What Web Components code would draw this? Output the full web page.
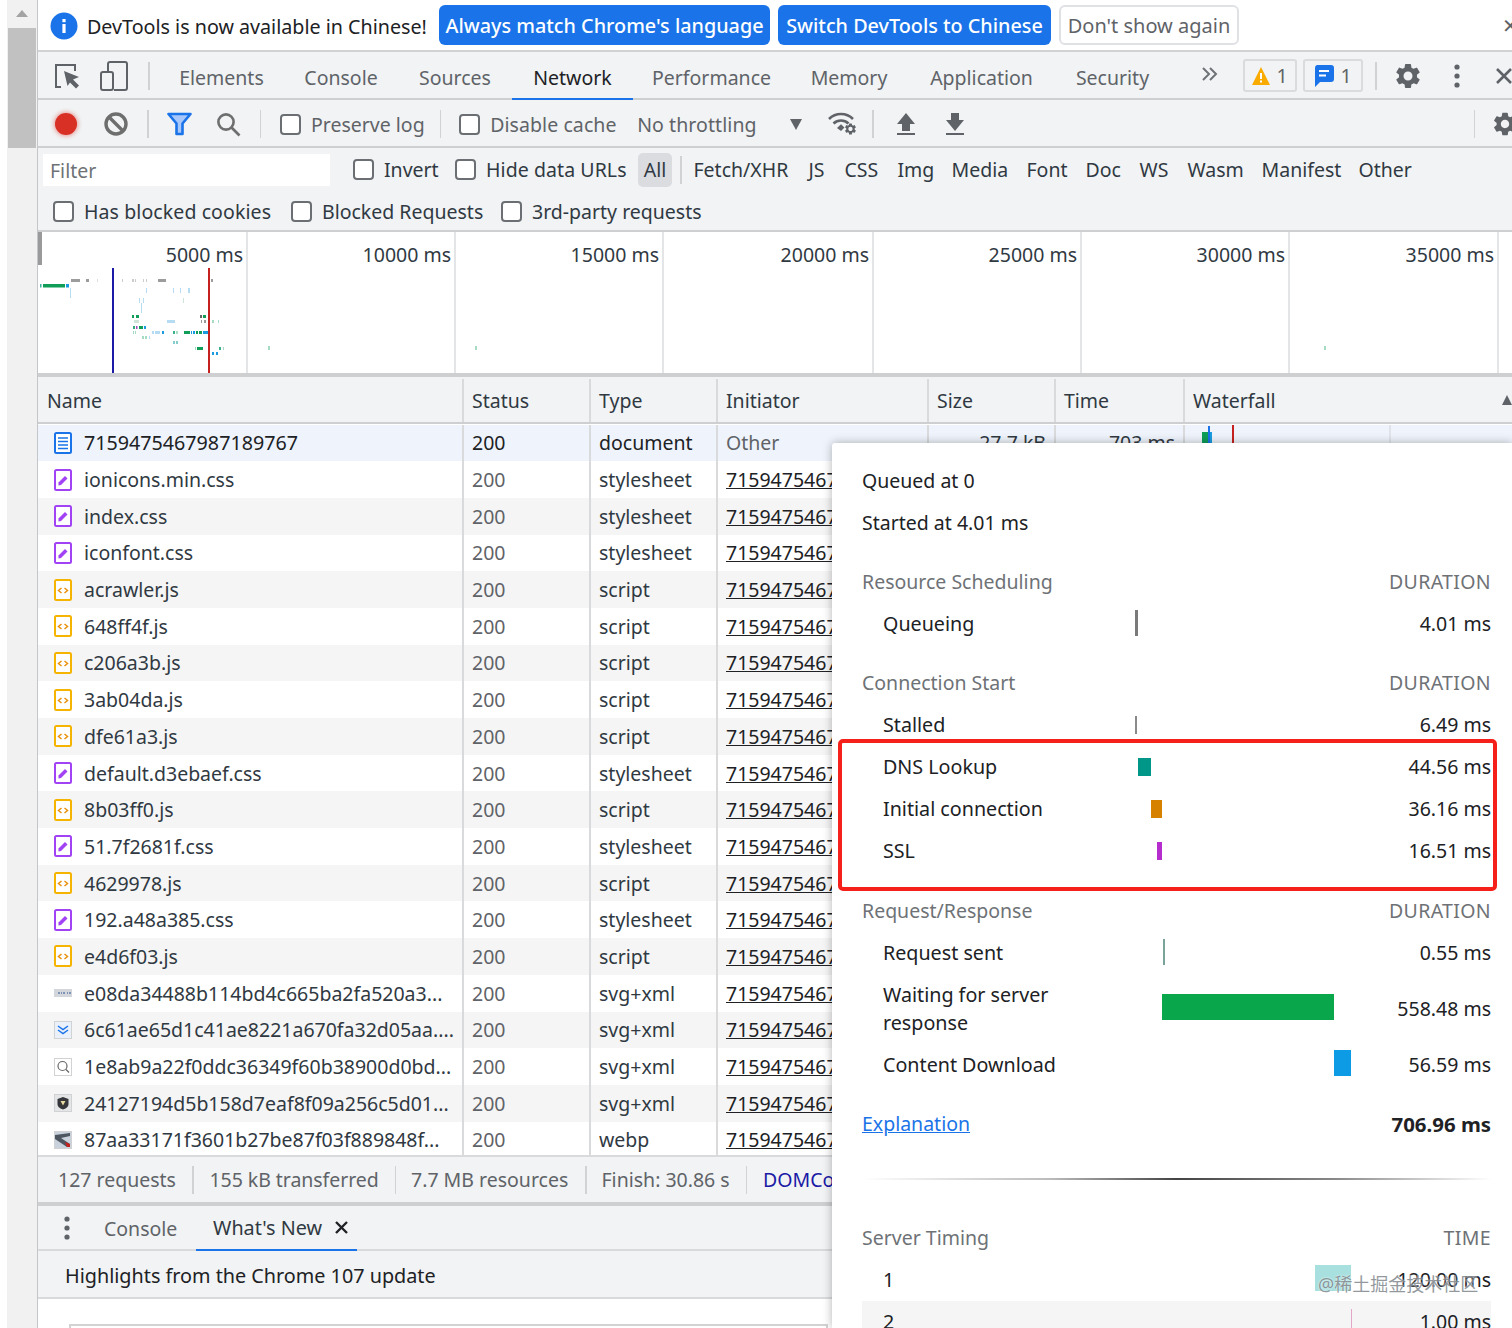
<!DOCTYPE html>
<html>
<head>
<meta charset="utf-8">
<title>DevTools Network</title>
<style>
  html, body { margin: 0; height: 1328px; overflow: hidden; background: #fff; }
  body { font: 19.5px "Noto Sans", "Noto Sans CJK SC", sans-serif; color: #303942; }
</style>
</head>
<body>
<dt-shell>
  <dt-infobar></dt-infobar>
  <dt-maintabs></dt-maintabs>
  <dt-nettoolbar></dt-nettoolbar>
  <dt-filterbar></dt-filterbar>
  <dt-overview></dt-overview>
  <net-table></net-table>
  <dt-summary></dt-summary>
  <dt-drawer></dt-drawer>
  <timing-popover slot="over"></timing-popover>
  <red-box slot="over"></red-box>
  <water-mark slot="over">@稀土掘金技术社区</water-mark>
</dt-shell>

<script>
const GEAR = 'M19.14 12.94c.04-.3.06-.61.06-.94 0-.32-.02-.64-.07-.94l2.03-1.58a.49.49 0 0 0 .12-.61l-1.92-3.32a.488.488 0 0 0-.59-.22l-2.39.96c-.5-.38-1.03-.7-1.62-.94l-.36-2.54a.484.484 0 0 0-.48-.41h-3.84c-.24 0-.43.17-.47.41l-.36 2.54c-.59.24-1.13.57-1.62.94l-2.39-.96c-.22-.08-.47 0-.59.22L2.74 8.87c-.12.21-.08.47.12.61l2.03 1.58c-.05.3-.09.63-.09.94s.02.64.07.94l-2.03 1.58a.49.49 0 0 0-.12.61l1.92 3.32c.12.22.37.29.59.22l2.39-.96c.5.38 1.03.7 1.62.94l.36 2.54c.05.24.24.41.48.41h3.84c.24 0 .44-.17.47-.41l.36-2.54c.59-.24 1.13-.56 1.62-.94l2.39.96c.22.08.47 0 .59-.22l1.92-3.32c.12-.22.07-.47-.12-.61l-2.01-1.58zM12 15.6c-1.98 0-3.6-1.62-3.6-3.6s1.62-3.6 3.6-3.6 3.6 1.62 3.6 3.6-1.62 3.6-3.6 3.6z';

class DtBase extends HTMLElement {
    constructor() {
        super();
        this.attachShadow({ mode: 'open' });
    }
    connectedCallback() {
        this.shadowRoot.innerHTML = `<style>${this.styles()}</style>${this.markup()}`;
    }
    styles() { return ':host{display:block}'; }
    markup() { return '<slot></slot>'; }
}

class DtShell extends DtBase {
    styles() {
        return `
        :host { display: flex; height: 1328px; position: relative; overflow: hidden; }
        .gutter { width: 30px; margin-left: 7px; background: #f1f1f1; flex: none; display: flex; flex-direction: column; align-items: center; }
        .arrow { margin-top: 10px; width: 0; height: 0; border: 6px solid transparent; border-top: 0; border-bottom: 7px solid #a3a3a3; }
        .thumb { margin-top: 11px; width: 28px; height: 120px; background: #c1c1c1; }
        .main { flex: 1; min-width: 0; border-left: 1px solid #c4c7c9; display: flex; flex-direction: column; overflow: hidden; }
        .main ::slotted(*) { flex: none; }
        `;
    }
    markup() {
        return `<div class="gutter"><div class="arrow"></div><div class="thumb"></div></div>
        <div class="main"><slot></slot></div><slot name="over"></slot>`;
    }
}

class DtCheck extends DtBase {
    styles() {
        return `
        :host { display: inline-flex; align-items: center; gap: 10px; white-space: nowrap; color: inherit; flex: none; }
        i { width: 17px; height: 17px; border: 2px solid #6b6f73; border-radius: 4px; background: #fff; flex: none; }
        `;
    }
    markup() { return '<i></i><span><slot></slot></span>'; }
}

class DtInfobar extends DtBase {
    styles() {
        return `
        :host { display: flex; align-items: center; height: 52px; box-sizing: border-box; border-bottom: 2px solid #d0d2d4; background: #fff; padding: 2px 0 0 12px; color: #202124; white-space: nowrap; overflow: hidden; font-size: 19.7px; }
        svg { width: 28px; height: 28px; flex: none; margin-top: -1px; }
        .msg { margin-left: 9px; width: 352px; flex: none; }
        .btn { height: 40px; margin-top: -2px; box-sizing: border-box; border-radius: 6px; display: flex; align-items: center; justify-content: center; font-weight: 500; flex: none; margin-right: 8px; }
        .pri { background: #1a73e8; color: #fff; font-size: 19.8px; }
        .sec { background: #fff; color: #5f6368; border: 2px solid #dfe1e5; font-size: 20px; font-weight: 400; }
        .x { margin-left: auto; color: #5f6368; margin-right: -7px; margin-top: -2px; font-size: 20px; }
        `;
    }
    markup() {
        return `<svg viewBox="0 0 28 28"><circle cx="14" cy="14" r="13.5" fill="#1a73e8"/><rect x="12.4" y="12" width="3.2" height="9" fill="#fff"/><rect x="12.4" y="7" width="3.2" height="3.2" fill="#fff"/></svg>
        <span class="msg">DevTools is now available in Chinese!</span>
        <div class="btn pri" style="width:331px">Always match Chrome's language</div>
        <div class="btn pri" style="width:273px">Switch DevTools to Chinese</div>
        <div class="btn sec" style="width:180px">Don't show again</div>
        <span class="x">✕</span>`;
    }
}

class DtMaintabs extends DtBase {
    styles() {
        return `
        :host { display: flex; align-items: stretch; height: 48px; box-sizing: border-box; padding-top: 1px; border-bottom: 2px solid #cdcfd1; background: #f1f3f4; color: #5f6368; white-space: nowrap; }
        .ic { display: flex; align-items: center; flex: none; }
        .sep { width: 1.5px; height: 28px; background: #d0d2d4; align-self: center; flex: none; }
        .tab { display: flex; align-items: center; justify-content: center; flex: none; box-sizing: border-box; height: 47px; margin-bottom: -2px; padding-top: 4px; border-bottom: 2px solid transparent; }
        .tab.on { color: #202124; border-bottom-color: #1a73e8; }
        .pill { align-self: center; display: flex; align-items: center; justify-content: center; gap: 6px; height: 33px; box-sizing: border-box; border: 2px solid #d9dbdd; border-radius: 3px; flex: none; }
        `;
    }
    markup() {
        const tabs = [['Elements', 125], ['Console', 114], ['Sources', 114], ['Network', 121, 1], ['Performance', 157], ['Memory', 118], ['Application', 147], ['Security', 115]];
        return `
        <div class="ic" style="margin-left:16px"><svg width="27" height="28" viewBox="0 0 27 28" fill="none"><path d="M7 25H2V3h19v6" stroke="#5f6368" stroke-width="2"/><path d="M10 9l15 6-6 2.4 6 6-3 3-6-6L13.500 24z" fill="#5f6368"/></svg></div>
        <div class="ic" style="margin-left:19px"><svg width="28" height="30" viewBox="0 0 28 30" fill="none" stroke="#5f6368" stroke-width="2"><path d="M8 10V3a2 2 0 0 1 2-2h15a2 2 0 0 1 2 2v24a2 2 0 0 1-2 2H14"/><rect x="1" y="11" width="12" height="18" rx="2"/></svg></div>
        <div class="sep" style="margin-left:20px"></div>
        <div style="width:9.500px;flex:none"></div>
        ${tabs.map(t => `<div class="tab${t[2] ? ' on' : ''}" style="width:${t[1]}px">${t[0]}</div>`).join('')}
        <div class="ic" style="margin-left:32px;margin-top:-4px"><svg width="16" height="14" viewBox="0 0 16 14" fill="none" stroke="#6e7276" stroke-width="2"><path d="M1 1l6 6-6 6M8 1l6 6-6 6"/></svg></div>
        <div class="pill" style="margin-left:25px;width:54px"><svg width="18" height="18" viewBox="0 0 18 18"><path d="M9 0l9 18H0z" fill="#f9ab00"/><rect x="8" y="6" width="2" height="6" fill="#fff"/><rect x="8" y="13.500" width="2" height="2" fill="#fff"/></svg><span>1</span></div>
        <div class="pill" style="margin-left:6px;width:60px"><svg width="20" height="22" viewBox="0 0 20 22"><path d="M3 0h14a3 3 0 0 1 3 3v11a3 3 0 0 1-3 3H6l-5 5V3a3 3 0 0 1 2-3z" fill="#1a73e8"/><rect x="5" y="5" width="10" height="2" fill="#fff"/><rect x="5" y="9.500" width="7" height="2" fill="#fff"/></svg><span>1</span></div>
        <div class="sep" style="margin-left:12px"></div>
        <div class="ic" style="margin-left:16px"><svg width="30" height="30" viewBox="0 0 24 24" fill="#5f6368"><path d="${GEAR}"/></svg></div>
        <div class="ic" style="margin-left:31px"><svg width="6" height="24" viewBox="0 0 6 24" fill="#5f6368"><circle cx="3" cy="3" r="2.600"/><circle cx="3" cy="12" r="2.600"/><circle cx="3" cy="21" r="2.600"/></svg></div>
        <div class="ic" style="margin-left:36px"><svg width="16" height="16" viewBox="0 0 16 16" stroke="#5f6368" stroke-width="2.600"><path d="M1 1l14 14M15 1L1 15"/></svg></div>`;
    }
}

class DtNettoolbar extends DtBase {
    styles() {
        return `
        :host { display: flex; align-items: center; height: 48px; box-sizing: border-box; padding-top: 2px; border-bottom: 2px solid #cdcfd1; background: #f1f3f4; color: #5f6368; white-space: nowrap; overflow: hidden; }
        .ic { display: flex; flex: none; }
        .sep { width: 1.5px; height: 28px; background: #d0d2d4; flex: none; }
        .rec { width: 22px; height: 22px; border-radius: 50%; background: #d93025; box-shadow: 0 0 4px 1px rgba(217,48,37,.45); flex: none; }
        .label { flex: none; }
        .tri { width: 0; height: 0; border: 6.5px solid transparent; border-bottom: 0; border-top: 11px solid #5f6368; flex: none; }
        `;
    }
    markup() {
        return `
        <div class="rec" style="margin-left:17px"></div>
        <div class="ic" style="margin-left:27px"><svg width="24" height="24" viewBox="0 0 24 24" fill="none" stroke="#6e6e6e" stroke-width="3.400"><circle cx="12" cy="12" r="10"/><path d="M5 5l14 14"/></svg></div>
        <div class="sep" style="margin-left:19px"></div>
        <div class="ic" style="margin-left:18px"><svg width="25" height="24" viewBox="0 0 25 24"><path d="M1.500 2h22l-8 9.500V22h-6V11.500z" fill="#a8c7fa" stroke="#1a73e8" stroke-width="2.600" stroke-linejoin="round"/></svg></div>
        <div class="ic" style="margin-left:24px"><svg width="25" height="25" viewBox="0 0 25 25" fill="none" stroke="#6e6e6e" stroke-width="2.600"><circle cx="10" cy="10" r="7.600"/><path d="M15.500 15.500l8 8"/></svg></div>
        <div class="sep" style="margin-left:19px"></div>
        <dt-check style="margin-left:19px">Preserve log</dt-check>
        <div class="sep" style="margin-left:15px"></div>
        <dt-check style="margin-left:18px;width:158px;letter-spacing:.08px">Disable cache</dt-check>
        <span class="label" style="margin-left:20px;width:153px;letter-spacing:.08px">No throttling</span>
        <div class="tri"></div>
        <div class="ic" style="margin-left:26px"><svg width="30" height="28" viewBox="0 0 30 28"><path d="M1 9a17 17 0 0 1 24 0M5.500 13.500a11 11 0 0 1 15 0" fill="none" stroke="#5f6368" stroke-width="2.600"/><path d="M9 18l4-3.800 3.500 3.200-3.500 3.600z" fill="#5f6368"/><g transform="translate(15.500 12) scale(.58)"><path fill="#5f6368" d="${GEAR}"/></g></svg></div>
        <div class="sep" style="margin-left:14px"></div>
        <div class="ic" style="margin-left:22px"><svg width="20" height="24" viewBox="0 0 20 24" fill="#5f6368"><path d="M10 1l9 11h-5v7H6v-7H1z"/><rect x="1" y="21" width="18" height="2"/></svg></div>
        <div class="ic" style="margin-left:29px"><svg width="20" height="24" viewBox="0 0 20 24" fill="#5f6368"><path d="M10 19L1 8h5V1h8v7h5z"/><rect x="1" y="21" width="18" height="2"/></svg></div>
        <div class="sep" style="margin-left:509px"></div>
        <div class="ic" style="margin-left:16px"><svg width="28" height="28" viewBox="0 0 24 24" fill="#5f6368"><path d="${GEAR}"/></svg></div>`;
    }
}

class DtFilterbar extends DtBase {
    styles() {
        return `
        :host { display: block; height: 84px; box-sizing: border-box; padding-top: 1px; border-bottom: 2px solid #cdcfd1; background: #f1f3f4; white-space: nowrap; overflow: hidden; color: #303942; }
        .row { display: flex; align-items: center; height: 41px; }
        .input { width: 287px; height: 32px; margin-left: 5px; background: #fff; box-sizing: border-box; padding: 2px 0 0 7px; color: #6e7276; display: flex; align-items: center; flex: none; }
        .all { width: 34px; height: 34px; background: #dadce0; border-radius: 5px; display: flex; align-items: center; justify-content: center; flex: none; }
        .sep { width: 1.5px; height: 28px; background: #d0d2d4; flex: none; margin: 0 12px 0 8px; }
        .t { flex: none; }
        `;
    }
    markup() {
        const kinds = [['Fetch/XHR', 115], ['JS', 36], ['CSS', 53], ['Img', 54], ['Media', 75], ['Font', 59], ['Doc', 54], ['WS', 48], ['Wasm', 74], ['Manifest', 97], ['Other', 60]];
        return `
        <div class="row">
          <div class="input">Filter</div>
          <dt-check style="margin-left:23px;width:102px">Invert</dt-check>
          <dt-check style="width:183px;letter-spacing:.08px">Hide data URLs</dt-check>
          <div class="all">All</div>
          <div class="sep"></div>
          ${kinds.map(k => `<span class="t" style="width:${k[1]}px">${k[0]}</span>`).join('')}
        </div>
        <div class="row" style="height:42px">
          <dt-check style="margin-left:15px;width:238px;letter-spacing:.1px">Has blocked cookies</dt-check>
          <dt-check style="width:210px">Blocked Requests</dt-check>
          <dt-check>3rd-party requests</dt-check>
        </div>`;
    }
}

class DtOverview extends DtBase {
    styles() {
        return `
        :host { display: block; position: relative; height: 145px; box-sizing: border-box; border-bottom: 4px solid #cdcfd1; background: #fff; overflow: hidden; }
        .grid { display: grid; grid-template-columns: 207px 208px 208px 210px 208px 208px 209px; height: 100%; padding-left: 3px; color: #303942; }
        .c { border-right: 2px solid #e4e5e6; text-align: right; padding: 9px 3px 0 0; white-space: nowrap; }
        svg { position: absolute; left: 0; top: 0; }
        `;
    }
    markup() {
        const L = '#b5dcf2', G = '#0f9d58', B = '#1a9be0', Y = '#9c9c9c', T = '#a5dcc3';
        const marks = [
            [71, 279, 9, 3, Y], [86, 279, 3, 3, Y], [97, 279, 1, 3, '#ddd'], [112, 279, 1, 3, '#ddd'], [122, 279, 1, 3, '#ccc'], [132, 279, 2, 3, '#ccc'], [135, 279, 1, 3, '#ccc'],
            [143, 279, 1, 3, '#ccc'], [146, 279, 1, 3, '#ccc'], [158, 279, 8, 3, Y], [211, 279, 2, 3, Y],
            [43, 284, 22, 3.5, G], [40, 284, 1.500, 3.5, '#3bb3a0'], [66, 284, 3, 3.500, B],
            [70, 288, 1, 10, L], [146, 288, 1, 5, L], [173, 288, 1, 5, L], [180, 288, 1, 5, L], [188, 288, 2, 5, L],
            [139, 298, 1, 5, L], [143, 298, 1, 5, L], [183, 298, 1, 5, '#cfe3d8'], [141, 303, 1, 10, L],
            [132, 315, 2, 3, G], [136, 315, 3, 3, G], [200, 315, 2, 3, '#666'], [203, 315, 3, 3, G],
            [134, 320, 5, 3, '#cfe3d8'], [167, 320, 8, 3, L], [201, 320, 1, 3, '#999'], [204, 320, 2, 3, '#999'], [212, 320, 2, 3, T], [218, 320, 1, 3, T],
            [133, 326, 2, 3, '#3a7'], [136, 326, 1.500, 3, '#a24bc0'], [139, 326, 4, 3, G], [144, 326, 2, 3, B],
            [133, 331, 1, 3, T], [135, 331, 1, 3, T], [152, 331, 2, 3, L], [155, 331, 5, 3, L], [162, 331, 2, 3, B],
            [173, 331, 2, 3, '#3bb38a'], [176, 331, 2, 3, T], [184, 331, 6, 3, G], [191, 331, 1, 3, B], [193, 331, 2, 3, B], [196, 331, 2, 3, G], [199, 331, 3, 3, G], [203, 331, 5, 3, B],
            [142, 336, 2, 3, T], [145, 336, 2, 3, T], [149, 336, 1, 3, L],
            [173, 341, 2, 3, '#8cc'], [176, 341, 2, 3, '#8cc'],
            [195, 347, 1, 3, T], [197, 347, 6, 3, G], [219, 347, 2, 3, '#3bb38a'], [223, 347, 1, 3, T],
            [212, 352, 2, 3, B], [216, 352, 2, 3, B],
            [268, 346, 2, 4, T], [475, 346, 2, 4, T], [1324, 346, 2, 4, T],
            [112, 268, 2, 106, '#1a1aa6'], [208, 268, 2, 106, '#c5221f'],
            [38, 232, 4, 33, '#9a9a9a']
        ];
        const labels = ['5000 ms', '10000 ms', '15000 ms', '20000 ms', '25000 ms', '30000 ms', '35000 ms'];
        // marks are given in page coordinates, the svg starts at x 38, y 232
        return `<div class="grid">${labels.map(l => `<div class="c">${l}</div>`).join('')}</div>
        <svg width="1474" height="141" viewBox="38 232 1474 141">${marks.map(m => `<rect x="${m[0]}" y="${m[1]}" width="${m[2]}" height="${m[3]}" fill="${m[4]}"/>`).join('')}</svg>`;
    }
}

class FileIcon extends DtBase {
    styles() { return ':host{display:flex;width:18px;height:22px;flex:none;align-items:center}svg{display:block}'; }
    markup() {
        const k = this.getAttribute('kind');
        const box = (c, inner) => `<svg width="18" height="22" viewBox="0 0 18 22"><rect x="1" y="1" width="16" height="20" rx="1.500" fill="#fff" stroke="${c}" stroke-width="2"/>${inner}</svg>`;
        if (k === 'doc') return box('#1a73e8', '<path d="M4 6h10M4 9.500h10M4 13h10M4 16.500h10" stroke="#1a73e8" stroke-width="1.500"/>');
        if (k === 'css') return box('#a142f4', '<path d="M4.500 16.500V13.500L11 7l2.500 2.500L7 16z" fill="#a142f4"/>');
        if (k === 'js') return box('#f4b400', '<path d="M7.500 9l-3 2.500 3 2.500M10.500 9l3 2.500-3 2.500" fill="none" stroke="#e8910c" stroke-width="1.500"/>');
        const thumb = (inner, bg) => `<svg width="18" height="18" viewBox="0 0 18 18"><rect x=".5" y=".5" width="17" height="17" fill="${bg || '#fff'}" stroke="#d0d2d4"/>${inner}</svg>`;
        if (k === 'img1') return `<svg width="18" height="8" viewBox="0 0 18 8"><rect width="18" height="8" fill="#d3d6da"/><path d="M4 4h2M7 4h1M9 4h2M13 4h1M15 4h2" stroke="#7f93b5" stroke-width="2"/></svg>`;
        if (k === 'img2') return thumb('<path d="M4 5l5 3.500L14 5M4 9l5 3.500L14 9" fill="none" stroke="#1a73e8" stroke-width="1.500"/>', '#eaf1fb');
        if (k === 'img3') return thumb('<circle cx="8.500" cy="8" r="4.500" fill="none" stroke="#666" stroke-width="1.200"/><path d="M12 11.500l3 3" stroke="#666" stroke-width="1.200"/>');
        if (k === 'img4') return thumb('<path d="M9 3l5.500 2v5c0 3-2.500 4.500-5.500 5.500C6 14.500 3.500 13 3.500 10V5z" fill="#35363a"/><path d="M6.500 7h5l-2.500 4.500z" fill="#e8d9a0"/>', '#e4e5e7');
        return thumb('<path d="M1 4l15-2v3L7 7l9 6v3H13L1 8z" fill="#4d5560"/><path d="M11 11l5 2v3h-3z" fill="#c5221f"/>', '#c9d2dc');
    }
}

class NetTable extends DtBase {
    styles() {
        return `
        :host { display: block; height: 778px; overflow: hidden; background: #fff; color: #303942; white-space: nowrap; --cols: 424px 127px 127px 211px 127px 129px 1fr; }
        .row { display: grid; grid-template-columns: var(--cols); height: 36.7px; }
        .row.head { height: 47px; box-sizing: border-box; padding-top: 2px; background: #f1f3f4; border-bottom: 2px solid #cdcfd1; }
        .body { margin-top: .5px; }
        .body .row:nth-child(odd) { background: #f5f5f5; }
        .body .row.sel { background: #eff4fc; }
        .c { display: flex; align-items: center; padding-left: 8px; border-left: 2px solid #d8dadc; overflow: hidden; min-width: 0; position: relative; }
        .c:first-child { border-left: 0; padding-left: 9px; }
        .body .c:first-child { padding-left: 16px; gap: 12px; }
        .sel .c:first-child { font-size: 19.7px; }
        .dim { color: #5f6368; }
        .dark { color: #202124; }
        .lnk { color: #202124; text-decoration: underline; }
        .r { justify-content: flex-end; padding-right: 8px; }
        .wf i { position: absolute; display: block; }
        .wf b { position: absolute; top: 0; bottom: 0; left: 204px; width: 2px; background: #e0e4ea; }
        .tri { position: absolute; right: 0; top: 16px; width: 0; height: 0; border: 5.5px solid transparent; border-top: 0; border-bottom: 10px solid #5f6368; }
        `;
    }
    markup() {
        const s = 'stylesheet', j = 'script', x = 'svg+xml';
        const rows = [
            ['ionicons.min.css', 'css', s], ['index.css', 'css', s], ['iconfont.css', 'css', s], ['acrawler.js', 'js', j], ['648ff4f.js', 'js', j],
            ['c206a3b.js', 'js', j], ['3ab04da.js', 'js', j], ['dfe61a3.js', 'js', j], ['default.d3ebaef.css', 'css', s], ['8b03ff0.js', 'js', j],
            ['51.7f2681f.css', 'css', s], ['4629978.js', 'js', j], ['192.a48a385.css', 'css', s], ['e4d6f03.js', 'js', j],
            ['e08da34488b114bd4c665ba2fa520a3...', 'img1', x], ['6c61ae65d1c41ae8221a670fa32d05aa....', 'img2', x], ['1e8ab9a22f0ddc36349f60b38900d0bd...', 'img3', x],
            ['24127194d5b158d7eaf8f09a256c5d01...', 'img4', x], ['87aa33171f3601b27be87f03f889848f...', 'img5', 'webp']
        ];
        const head = ['Name', 'Status', 'Type', 'Initiator', 'Size', 'Time'];
        const body = rows.map(r => `<div class="row"><div class="c"><file-icon kind="${r[1]}"></file-icon>${r[0]}</div><div class="c dim">200</div><div class="c">${r[2]}</div><div class="c"><span class="lnk">7159475467987189767</span></div><div class="c"></div><div class="c"></div><div class="c"></div></div>`).join('');
        return `<div class="row head">${head.map(h => `<div class="c">${h}</div>`).join('')}<div class="c">Waterfall<span class="tri"></span></div></div>
        <div class="body">
          <div class="row sel">
            <div class="c dark"><file-icon kind="doc"></file-icon>7159475467987189767</div>
            <div class="c dark">200</div>
            <div class="c dark">document</div>
            <div class="c dim">Other</div>
            <div class="c r">27.7 kB</div>
            <div class="c r">703 ms</div>
            <div class="c wf"><b></b>
              <i style="left:17px;top:7px;width:6px;height:12px;background:#0f9d58"></i>
              <i style="left:23px;top:1px;width:2px;height:18px;background:#1a73e8"></i>
              <i style="left:25px;top:7px;width:2px;height:12px;background:#1a9be0"></i>
              <i style="left:47px;top:0;width:2px;height:20px;background:#c5221f"></i>
            </div>
          </div>
          ${body}
        </div>`;
    }
}

class DtSummary extends DtBase {
    styles() {
        return `
        :host { display: flex; align-items: center; height: 51px; box-sizing: border-box; border-top: 2px solid #d8dadc; border-bottom: 4px solid #cdcfd1; background: #f1f3f4; color: #5f6368; white-space: nowrap; overflow: hidden; padding-left: 20px; }
        span { flex: none; box-sizing: border-box; }
        i { width: 1.500px; height: 28px; background: #d0d2d4; flex: none; }
        .dcl { color: #1a1aa6; }
        `;
    }
    markup() {
        return `<span style="width:134px">127 requests</span><i></i><span style="width:201px;padding-left:16px;letter-spacing:-.05px">155 kB transferred</span><i></i>
        <span style="width:189px;padding-left:15px">7.7 MB resources</span><i></i><span style="width:159px;padding-left:15px">Finish: 30.86 s</span><i></i>
        <span class="dcl" style="padding-left:16px">DOMContentLoaded: 1.55 s</span>`;
    }
}

class DtDrawer extends DtBase {
    styles() {
        return `
        :host { display: block; background: #fff; color: #303942; white-space: nowrap; }
        .tabs { display: flex; align-items: stretch; height: 45px; box-sizing: border-box; border-bottom: 2px solid #d8dadc; background: #f1f3f4; color: #5f6368; }
        .kebab { display: flex; align-items: center; margin-left: 26px; width: 31px; flex: none; }
        .tab { display: flex; align-items: center; flex: none; box-sizing: border-box; height: 45px; }
        .on { color: #303942; border-bottom: 2px solid #1a73e8; gap: 13px; padding-left: 17px; width: 161px; font-size: 19.8px; }
        .bar { height: 48px; box-sizing: border-box; padding-top: 3px; border-bottom: 2px solid #d8dadc; background: #f1f3f4; display: flex; align-items: center; padding-left: 27px; color: #202124; font-size: 19.8px; }
        .page { padding: 25px 0 0 31px; }
        .box { width: 755px; height: 20px; border: 2px solid #d0d2d4; border-bottom: 0; }
        `;
    }
    markup() {
        return `<div class="tabs">
          <div class="kebab"><svg width="6" height="24" viewBox="0 0 6 24" fill="#5f6368"><circle cx="3" cy="3" r="2.600"/><circle cx="3" cy="12" r="2.600"/><circle cx="3" cy="21" r="2.600"/></svg></div>
          <div class="tab" style="margin-left:9px;width:92px">Console</div>
          <div class="tab on">What's New<svg width="13" height="13" viewBox="0 0 13 13" stroke="#202124" stroke-width="2.400"><path d="M1 1l11 11M12 1L1 12"/></svg></div>
        </div>
        <div class="bar">Highlights from the Chrome 107 update</div>
        <div class="page"><div class="box"></div></div>`;
    }
}

class TimingRow extends DtBase {
    styles() {
        return `
        :host { display: grid; grid-template-columns: 273px 217px 1fr; align-items: center; min-height: 42px; color: #202124; }
        .l { padding-left: 21px; max-width: 190px; line-height: 28px; font-size: 19.7px; }
        .bar { height: 26px; display: flex; align-items: center; }
        .bar i { display: block; height: 100%; }
        .d { text-align: right; white-space: nowrap; }
        `;
    }
    markup() {
        const a = k => this.getAttribute(k);
        return `<div class="l"><slot></slot></div>
        <div class="bar" style="margin-top:${a('dy') || 0}px"><i style="margin-left:${a('x') || 0}px;width:${a('w') || 0}px;height:${a('h') || 26}px;background:${a('c') || 'none'}"></i></div>
        <div class="d">${a('d')}</div>`;
    }
}

class TimingHead extends DtBase {
    styles() {
        return ':host{display:flex;justify-content:space-between;align-items:center;height:42px;color:#6e7276}.r{letter-spacing:.35px}';
    }
    markup() { return `<span><slot></slot></span><span class="r">${this.getAttribute('r')}</span>`; }
}

class TimingPopover extends DtBase {
    styles() {
        return `
        :host { display: block; position: absolute; left: 832px; top: 443px; width: 680px; height: 885px; box-sizing: border-box; padding: 16.5px 21px 0 30px; background: #fff; border-radius: 3px 0 0 0; box-shadow: 0 0 10px rgba(0,0,0,.3); overflow: hidden; color: #202124; }
        .line { height: 42px; display: flex; align-items: center; }
        .sp { height: 17px; }
        .link { color: #1a73e8; text-decoration: underline; }
        .tot { display: flex; justify-content: space-between; align-items: center; height: 42px; font-weight: 700; font-size: 20.4px; }
        .tot a { font-weight: 400; font-size: 19.5px; }
        .rule { height: 2px; margin: 33px 0 37px; background: linear-gradient(90deg, #fff, #bbb 30%, #444 50%, #888 75%, #fff); }
        .st2 { background: #f5f5f5; }
        `;
    }
    markup() {
        return `
        <div class="line">Queued at 0</div>
        <div class="line">Started at 4.01 ms</div>
        <div class="sp"></div>
        <timing-head r="DURATION">Resource Scheduling</timing-head>
        <timing-row x="0" w="3" dy="-2" c="#7a7a7a" d="4.01 ms">Queueing</timing-row>
        <div class="sp"></div>
        <timing-head r="DURATION">Connection Start</timing-head>
        <timing-row x="0" w="2" h="18" c="#8a8a8a" d="6.49 ms">Stalled</timing-row>
        <timing-row x="3" w="13" h="18" c="#009688" d="44.56 ms">DNS Lookup</timing-row>
        <timing-row x="16" w="11" h="18" c="#d68100" d="36.16 ms">Initial connection</timing-row>
        <timing-row x="22" w="5" h="18" c="#b52dcd" d="16.51 ms">SSL</timing-row>
        <div class="sp" style="height:18px"></div>
        <timing-head r="DURATION">Request/Response</timing-head>
        <timing-row x="28" w="1.500" dy="-2" c="#7aa39a" d="0.55 ms">Request sent</timing-row>
        <timing-row x="27" w="172" dy="-4" c="#0aa64c" d="558.48 ms" style="min-height:70px">Waiting for server response</timing-row>
        <timing-row x="199" w="17" dy="-4" c="#0d9be6" d="56.59 ms">Content Download</timing-row>
        <div class="sp"></div>
        <div class="tot"><a class="link">Explanation</a><span>706.96 ms</span></div>
        <div class="rule"></div>
        <timing-head r="TIME">Server Timing</timing-head>
        <timing-row x="180" w="36" dy="-4" c="#a8e0df" d="120.00 ms">1</timing-row>
        <timing-row class="st2" x="216" w="1.500" c="#e3a6c8" d="1.00 ms">2</timing-row>`;
    }
}

class RedBox extends DtBase {
    styles() { return ':host{display:block;position:absolute;left:838px;top:739px;width:659px;height:152px;box-sizing:border-box;border:4px solid #f5201a;border-radius:5px}'; }
}

class WaterMark extends DtBase {
    styles() { return ':host{display:block;position:absolute;left:1318px;top:1271px;font-size:18px;line-height:26px;color:rgba(110,118,124,.75);white-space:nowrap;text-shadow:0 0 2px #fff}'; }
}

const defs = {
    'dt-shell': DtShell, 'dt-check': DtCheck, 'dt-infobar': DtInfobar, 'dt-maintabs': DtMaintabs, 'dt-nettoolbar': DtNettoolbar,
    'dt-filterbar': DtFilterbar, 'dt-overview': DtOverview, 'file-icon': FileIcon, 'net-table': NetTable, 'dt-summary': DtSummary,
    'dt-drawer': DtDrawer, 'timing-row': TimingRow, 'timing-head': TimingHead, 'timing-popover': TimingPopover, 'red-box': RedBox, 'water-mark': WaterMark
};
Object.keys(defs).forEach(k => customElements.define(k, defs[k]));
</script>
</body>
</html>
